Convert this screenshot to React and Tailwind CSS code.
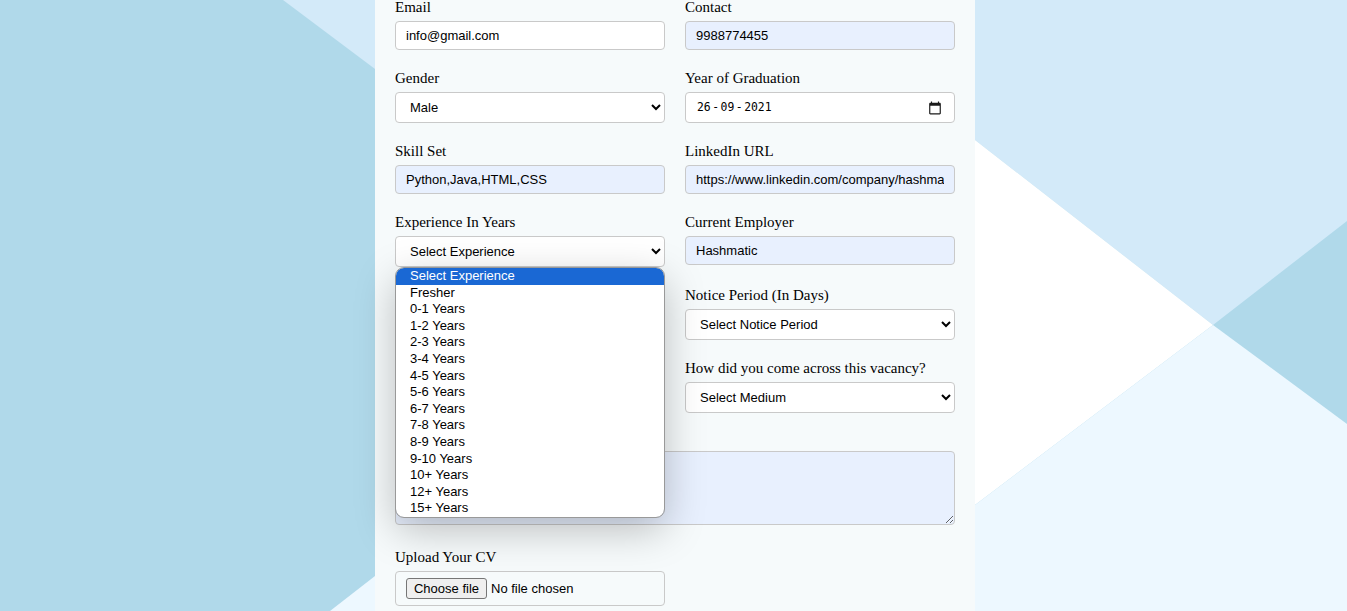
import React from 'react';

const experience = ['Select Experience', 'Fresher', '0-1 Years', '1-2 Years', '2-3 Years', '3-4 Years', '4-5 Years', '5-6 Years', '6-7 Years', '7-8 Years', '8-9 Years', '9-10 Years', '10+ Years', '12+ Years', '15+ Years'];

const sans = "font-['Liberation_Sans',Arial,sans-serif]";
const inputCls = `block w-full h-[29px] px-[10px] border border-[#c9c9c9] rounded-[4px] text-[13px] text-black outline-none ${sans}`;
const selectCls = `block w-full h-[31px] pl-[10px] border border-[#c9c9c9] rounded-[4px] bg-white text-[13px] text-black outline-none ${sans}`;

const Field = ({ label, children }) => (
  <div className="relative">
    <label className="block h-[18px] mb-[5px] text-[15px] leading-[19px] text-black whitespace-nowrap">{label}</label>
    {children}
  </div>
);

const TextInput = ({ value, filled }) => (
  <input readOnly value={value} className={`${inputCls} ${filled ? 'bg-[#e8f0fe]' : 'bg-white'}`} />
);

const Select = ({ value }) => (
  <select defaultValue={value} className={selectCls}>
    <option>{value}</option>
  </select>
);

const Background = () => (
  <svg className="absolute inset-0" width="1347" height="611" viewBox="0 0 1347 611">
    <rect width="1347" height="611" fill="#b0d9ea" />
    <polygon points="283,0 375,69 375,0" fill="#d3eaf9" />
    <polygon points="330,611 375,576 375,611" fill="#edf8ff" />
    <polygon points="975,0 1347,0 1347,221 1213,325 975,140" fill="#d3eaf9" />
    <polygon points="975,140 1213,325 975,505" fill="#ffffff" />
    <polygon points="975,505 1213,325 1347,424 1347,611 975,611" fill="#edf8ff" />
  </svg>
);

// the browser here would print the date as mm/dd/yyyy, so it's drawn by hand
const DateField = () => (
  <div className="flex items-center justify-between h-[31px] pl-[11px] pr-[12px] border border-[#c9c9c9] rounded-[4px] bg-white text-[11.4px] text-black font-['DejaVu_Sans_Mono',monospace]">
    <span className="whitespace-nowrap">
      26<span className="mx-[1.5px]">-</span>09<span className="mx-[1.5px]">-</span>2021
    </span>
    <svg width="14" height="14" viewBox="0 0 24 24" fill="#1a1a1a">
      <path d="M20 3h-1V1h-2v2H7V1H5v2H4c-1.1 0-2 .9-2 2v16c0 1.1.9 2 2 2h16c1.1 0 2-.9 2-2V5c0-1.1-.9-2-2-2zm0 18H4V8h16v13z" />
    </svg>
  </div>
);

const App = () => {
  return (
    <div className="relative h-[611px] overflow-hidden font-['Liberation_Serif','Times_New_Roman',serif]">
      <Background />
      <div className="relative flow-root w-[600px] h-[611px] ml-[375px] px-5 bg-[#f6fafb]">
        <div className="-mt-[2px] grid grid-cols-2 gap-x-5 gap-y-[19px]">
          <Field label="Email"><TextInput value="info@gmail.com" /></Field>
          <Field label="Contact"><TextInput value="9988774455" filled /></Field>

          <Field label="Gender"><Select value="Male" /></Field>
          <Field label="Year of Graduation"><DateField /></Field>

          <Field label="Skill Set"><TextInput value="Python,Java,HTML,CSS" filled /></Field>
          <Field label="LinkedIn URL"><TextInput value="https://www.linkedin.com/company/hashmatic" filled /></Field>

          <Field label="Experience In Years">
            <Select value="Select Experience" />
            <ul className={`absolute z-10 left-[1px] right-[1px] top-[55px] h-[249px] overflow-hidden bg-white rounded-[8px] outline outline-[#999999] shadow-[0_12px_40px_rgba(0,0,0,0.25)] text-[13px] leading-[16.6px] text-black ${sans}`}>
              {experience.map((item, i) => (
                <li key={item} className={`h-[16.6px] pl-[14px] whitespace-nowrap ${i === 0 ? 'bg-[#1a68d4] text-white' : ''}`}>{item}</li>
              ))}
            </ul>
          </Field>
          <Field label="Current Employer"><TextInput value="Hashmatic" filled /></Field>

          {/* these two sit behind the open list, their text can't be read */}
          <Field label=""><Select value="" /></Field>
          <Field label="Notice Period (In Days)"><Select value="Select Notice Period" /></Field>

          <Field label=""><Select value="" /></Field>
          <Field label="How did you come across this vacancy?"><Select value="Select Medium" /></Field>
        </div>

        <div className="mt-[15px]">
          <Field label="">
            <textarea readOnly className="block w-full h-[74px] border border-[#c9c9c9] rounded-[4px] bg-[#e8f0fe] outline-none" />
          </Field>
        </div>

        <div className="mt-[23px] w-[270px]">
          <Field label="Upload Your CV">
            <label className={`flex items-center gap-[4px] h-[35px] px-[10px] border border-[#c9c9c9] rounded-[4px] text-[13px] text-black ${sans}`}>
              <input type="file" className="hidden" />
              <span className="flex items-center justify-center w-[81px] h-[21px] bg-[#efefef] border border-[#767676] rounded-[3px]">Choose file</span>
              <span>No file chosen</span>
            </label>
          </Field>
        </div>
      </div>
    </div>
  );
};

export default App;
